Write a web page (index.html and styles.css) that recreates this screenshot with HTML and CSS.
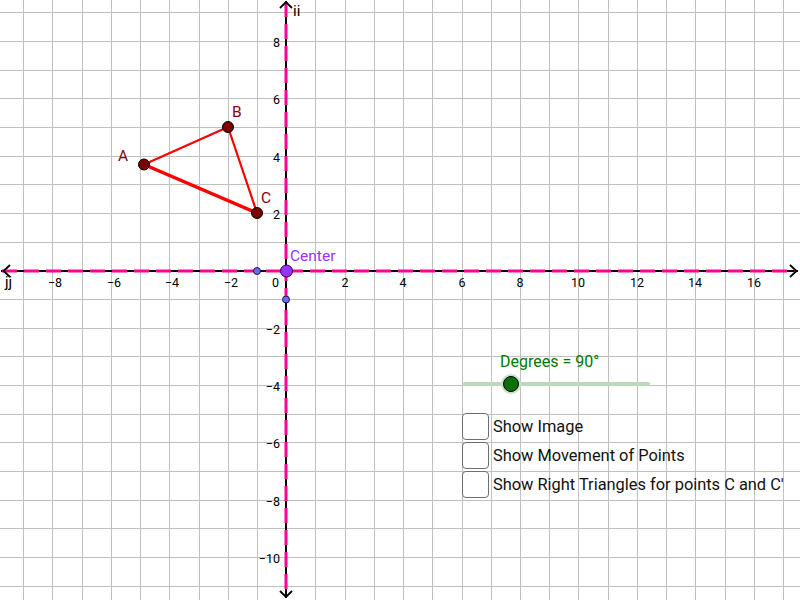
FILE: index.html
```html
<!DOCTYPE html>
<html>
<head>
<meta charset="utf-8">
<link rel="stylesheet" href="styles.css">
</head>
<body>
<div class="board">
  <svg class="canvas" width="800" height="600" viewBox="0 0 800 600">
    <path class="grid" d="M23.5 0V600M52.5 0V600M82.5 0V600M111.5 0V600M140.5 0V600M169.5 0V600M199.5 0V600M228.5 0V600M257.5 0V600M315.5 0V600M345.5 0V600M374.5 0V600M403.5 0V600M432.5 0V600M462.5 0V600M491.5 0V600M520.5 0V600M549.5 0V600M578.5 0V600M608.5 0V600M637.5 0V600M666.5 0V600M695.5 0V600M725.5 0V600M754.5 0V600M783.5 0V600M0 12.5H800M0 41.5H800M0 70.5H800M0 98.5H800M0 127.5H800M0 156.5H800M0 184.5H800M0 213.5H800M0 242.5H800M0 299.5H800M0 328.5H800M0 356.5H800M0 385.5H800M0 414.5H800M0 442.5H800M0 471.5H800M0 500.5H800M0 528.5H800M0 557.5H800M0 586.5H800"/>

    <line class="axis" x1="1" y1="271" x2="798" y2="271"/>
    <line class="axis" x1="286" y1="1" x2="286" y2="598"/>
    <line class="axis-dash" x1="2" y1="271" x2="796" y2="271"/>
    <line class="axis-dash" x1="286" y1="2" x2="286" y2="596"/>
    <polyline class="arrow" points="790,265 796.5,271 790,277"/>
    <polyline class="arrow" points="10,265 3.5,271 10,277"/>
    <polyline class="arrow" points="280,8 286,2 292,8"/>
    <polyline class="arrow" points="280,591 286,597 292,591"/>

    <g class="ticks-x">
      <text x="55" y="287">−8</text>
      <text x="114" y="287">−6</text>
      <text x="172" y="287">−4</text>
      <text x="231" y="287">−2</text>
      <text x="345" y="287">2</text>
      <text x="403" y="287">4</text>
      <text x="462" y="287">6</text>
      <text x="520" y="287">8</text>
      <text x="578" y="287">10</text>
      <text x="637" y="287">12</text>
      <text x="695" y="287">14</text>
      <text x="754" y="287">16</text>
    </g>
    <g class="ticks-y">
      <text x="279" y="287">0</text>
      <text x="280" y="46.5">8</text>
      <text x="280" y="104">6</text>
      <text x="280" y="161.5">4</text>
      <text x="280" y="218.5">2</text>
      <text x="280" y="333.5">−2</text>
      <text x="280" y="390.5">−4</text>
      <text x="280" y="448">−6</text>
      <text x="280" y="505.5">−8</text>
      <text x="280" y="562.5">−10</text>
    </g>
    <text class="axis-name" x="5" y="287">jj</text>
    <text class="axis-name" x="293" y="16">ii</text>

    <line class="side" x1="144" y1="164.5" x2="228" y2="127"/>
    <line class="side" x1="228" y1="127" x2="257" y2="213"/>
    <line class="side thick" x1="257" y1="213" x2="144" y2="164.5"/>

    <circle class="pt" cx="144" cy="164.5" r="5.5"/>
    <circle class="pt" cx="228" cy="127" r="5.5"/>
    <circle class="pt" cx="257" cy="213" r="5.5"/>
    <text class="pt-label" x="118" y="161">A</text>
    <text class="pt-label" x="232" y="117">B</text>
    <text class="pt-label" x="261" y="202.5">C</text>

    <circle class="small-pt" cx="257" cy="271" r="3.5"/>
    <circle class="small-pt" cx="286" cy="299.5" r="3.5"/>
    <circle class="center-pt" cx="286.5" cy="271" r="6"/>
    <text class="center-label" x="290" y="261">Center</text>
  </svg>

  <div class="controls">
    <div class="slider">
      <div class="slider-label">Degrees = 90°</div>
      <div class="track">
        <div class="knob"></div>
      </div>
    </div>
    <div class="checks">
      <label class="check"><span class="box"></span><span class="check-text">Show Image</span></label>
      <label class="check"><span class="box"></span><span class="check-text">Show Movement of Points</span></label>
      <label class="check"><span class="box"></span><span class="check-text">Show Right Triangles for points C and C'</span></label>
    </div>
  </div>
</div>
</body>
</html>
```

FILE: styles.css
```css
html, body {
  margin: 0;
  padding: 0;
  background: #ffffff;
}

.board {
  position: relative;
  width: 800px;
  height: 600px;
  overflow: hidden;
  font-family: Roboto, "Liberation Sans", sans-serif;
}

.canvas {
  display: block;
}

.grid {
  stroke: #c0c0c0;
  stroke-width: 1;
  fill: none;
  shape-rendering: crispEdges;
}

.axis {
  stroke: #000000;
  stroke-width: 2;
}

.axis-dash {
  stroke: #ff0099;
  stroke-width: 3;
  stroke-dasharray: 15 7;
}

.arrow {
  fill: none;
  stroke: #000000;
  stroke-width: 1.8;
}

.canvas text {
  font-family: Roboto, "Liberation Sans", sans-serif;
}

.ticks-x text {
  font-size: 12.5px;
  text-anchor: middle;
  fill: #000;
}

.ticks-y text {
  font-size: 12.5px;
  text-anchor: end;
  fill: #000;
}

.axis-name {
  font-size: 15px;
  fill: #000;
}

.side {
  stroke: #ff0000;
  stroke-width: 2.2;
  stroke-linecap: round;
}

.side.thick {
  stroke-width: 3.5;
}

.pt {
  fill: #7a0000;
  stroke: #000;
  stroke-width: 1;
}

.pt-label {
  font-size: 15.5px;
  fill: #8b0000;
}

.small-pt {
  fill: #6a6aff;
  stroke: #1a1a40;
  stroke-width: 1;
}

.center-pt {
  fill: #9933ff;
  stroke: #2a0050;
  stroke-width: 1;
}

.center-label {
  font-size: 15.5px;
  fill: #9933ff;
}

.controls {
  position: absolute;
  left: 462px;
  top: 352px;
  display: flex;
  flex-direction: column;
}

.slider {
  display: flex;
  flex-direction: column;
  height: 59px;
}

.slider-label {
  margin-left: 38px;
  font-size: 16px;
  line-height: 19px;
  color: #007a00;
}

.track {
  position: relative;
  margin-top: 11px;
  margin-left: 1px;
  width: 187px;
  height: 4px;
  border-radius: 2px;
  background: #bcd9bc;
}

.knob {
  position: absolute;
  left: 40px;
  top: -6px;
  width: 16px;
  height: 16px;
  border-radius: 50%;
  background: #0a6e0a;
  border: 1px solid #000;
  box-sizing: border-box;
  box-shadow: 0 0 0 2px #c8e0c8;
}

.checks {
  display: flex;
  flex-direction: column;
  gap: 2px;
  margin-top: 2px;
}

.check {
  display: flex;
  align-items: center;
  gap: 4px;
  height: 27px;
}

.box {
  width: 27px;
  height: 27px;
  box-sizing: border-box;
  border: 1.5px solid #6e6e6e;
  border-radius: 4px;
  background: #ffffff;
}

.check-text {
  font-size: 16.4px;
  color: #111;
  white-space: nowrap;
}
```
